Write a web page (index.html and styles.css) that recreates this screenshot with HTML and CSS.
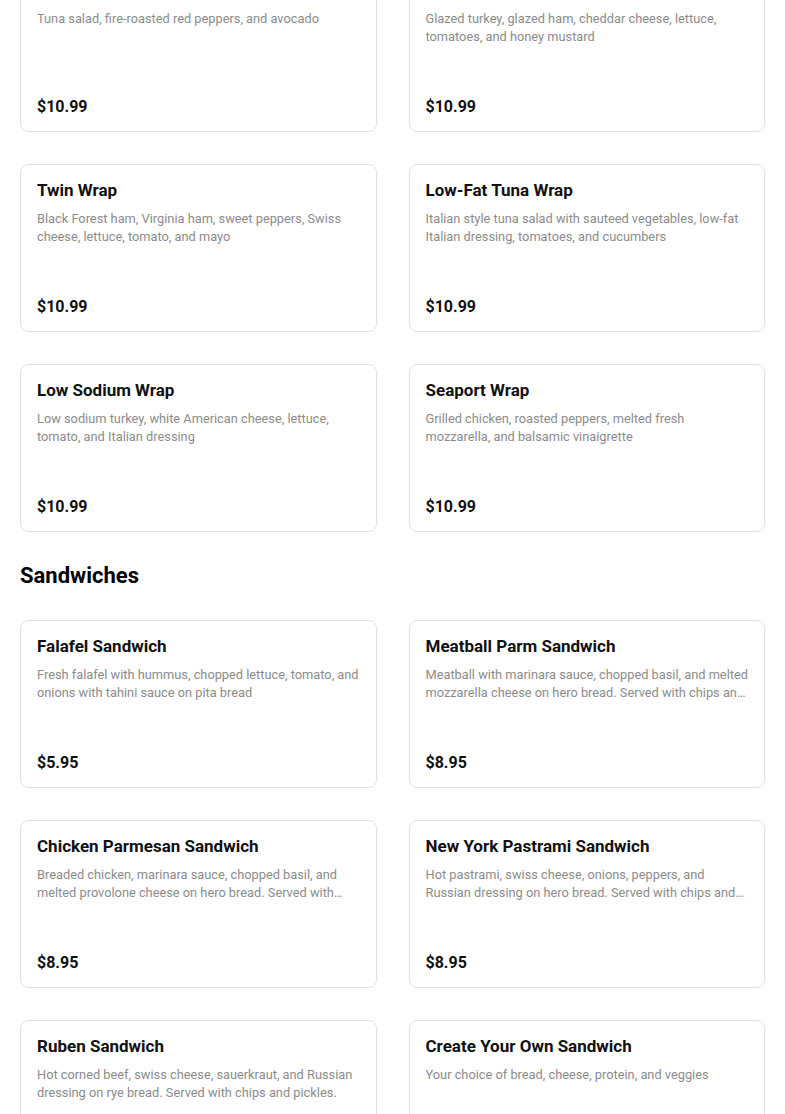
FILE: index.html
```html
<!DOCTYPE html>
<html lang="en">
<head>
<meta charset="utf-8">
<title>Menu</title>
<link rel="stylesheet" href="styles.css">
</head>
<body>
<main class="menu">
  <section class="section section-first">
    <div class="grid">
      <article class="card">
        <h3 class="card-title">Tuna Avocado Wrap</h3>
        <p class="card-desc">Tuna salad, fire-roasted red peppers, and avocado</p>
        <div class="card-price">$10.99</div>
      </article>
      <article class="card">
        <h3 class="card-title">Honey Ham &amp; Turkey Wrap</h3>
        <p class="card-desc">Glazed turkey, glazed ham, cheddar cheese, lettuce, tomatoes, and honey mustard</p>
        <div class="card-price">$10.99</div>
      </article>
      <article class="card">
        <h3 class="card-title">Twin Wrap</h3>
        <p class="card-desc">Black Forest ham, Virginia ham, sweet peppers, Swiss cheese, lettuce, tomato, and mayo</p>
        <div class="card-price">$10.99</div>
      </article>
      <article class="card">
        <h3 class="card-title">Low-Fat Tuna Wrap</h3>
        <p class="card-desc">Italian style tuna salad with sauteed vegetables, low-fat Italian dressing, tomatoes, and cucumbers</p>
        <div class="card-price">$10.99</div>
      </article>
      <article class="card">
        <h3 class="card-title">Low Sodium Wrap</h3>
        <p class="card-desc">Low sodium turkey, white American cheese, lettuce, tomato, and Italian dressing</p>
        <div class="card-price">$10.99</div>
      </article>
      <article class="card">
        <h3 class="card-title">Seaport Wrap</h3>
        <p class="card-desc">Grilled chicken, roasted peppers, melted fresh mozzarella, and balsamic vinaigrette</p>
        <div class="card-price">$10.99</div>
      </article>
    </div>
  </section>

  <section class="section">
    <h2 class="section-title">Sandwiches</h2>
    <div class="grid">
      <article class="card">
        <h3 class="card-title">Falafel Sandwich</h3>
        <p class="card-desc">Fresh falafel with hummus, chopped lettuce, tomato, and onions with tahini sauce on pita bread</p>
        <div class="card-price">$5.95</div>
      </article>
      <article class="card">
        <h3 class="card-title">Meatball Parm Sandwich</h3>
        <p class="card-desc">Meatball with marinara sauce, chopped basil, and melted mozzarella cheese on hero bread. Served with chips and pickles.</p>
        <div class="card-price">$8.95</div>
      </article>
      <article class="card">
        <h3 class="card-title">Chicken Parmesan Sandwich</h3>
        <p class="card-desc">Breaded chicken, marinara sauce, chopped basil, and melted provolone cheese on hero bread. Served with chips and pickles.</p>
        <div class="card-price">$8.95</div>
      </article>
      <article class="card">
        <h3 class="card-title">New York Pastrami Sandwich</h3>
        <p class="card-desc">Hot pastrami, swiss cheese, onions, peppers, and Russian dressing on hero bread. Served with chips and pickles.</p>
        <div class="card-price">$8.95</div>
      </article>
      <article class="card">
        <h3 class="card-title">Ruben Sandwich</h3>
        <p class="card-desc">Hot corned beef, swiss cheese, sauerkraut, and Russian dressing on rye bread. Served with chips and pickles.</p>
        <div class="card-price">$8.95</div>
      </article>
      <article class="card">
        <h3 class="card-title">Create Your Own Sandwich</h3>
        <p class="card-desc">Your choice of bread, cheese, protein, and veggies</p>
        <div class="card-price">$8.95</div>
      </article>
    </div>
  </section>
</main>
</body>
</html>
```

FILE: styles.css
```css
* {
  box-sizing: border-box;
}

html, body {
  margin: 0;
  padding: 0;
  background: #ffffff;
}

body {
  font-family: Roboto, "Liberation Sans", Arial, sans-serif;
  color: #000000;
  overflow: hidden;
}

.menu {
  padding: 0 20px;
}

.section-first {
  margin-top: -36px;
}

.section-title {
  margin: 30px 0 30px;
  font-size: 22px;
  line-height: 28px;
  font-weight: 700;
  color: #000;
}

.grid {
  display: grid;
  grid-template-columns: 1fr 1fr;
  column-gap: 32px;
  row-gap: 32px;
}

.card {
  height: 168px;
  display: flex;
  flex-direction: column;
  padding: 16px 16px 14px;
  border: 1px solid #e2e2e2;
  border-radius: 8px;
  background: #fff;
}

.card-title {
  margin: 0;
  font-size: 17px;
  line-height: 18px;
  font-weight: 700;
  color: #111;
  white-space: nowrap;
  overflow: hidden;
  text-overflow: ellipsis;
}

.card-desc {
  margin: 11px 0 0;
  font-size: 12.8px;
  line-height: 18px;
  color: #8c8c8c;
  display: -webkit-box;
  -webkit-line-clamp: 2;
  -webkit-box-orient: vertical;
  overflow: hidden;
}

.card-price {
  margin-top: auto;
  font-size: 16px;
  line-height: 20px;
  font-weight: 700;
  color: #111;
}
```
